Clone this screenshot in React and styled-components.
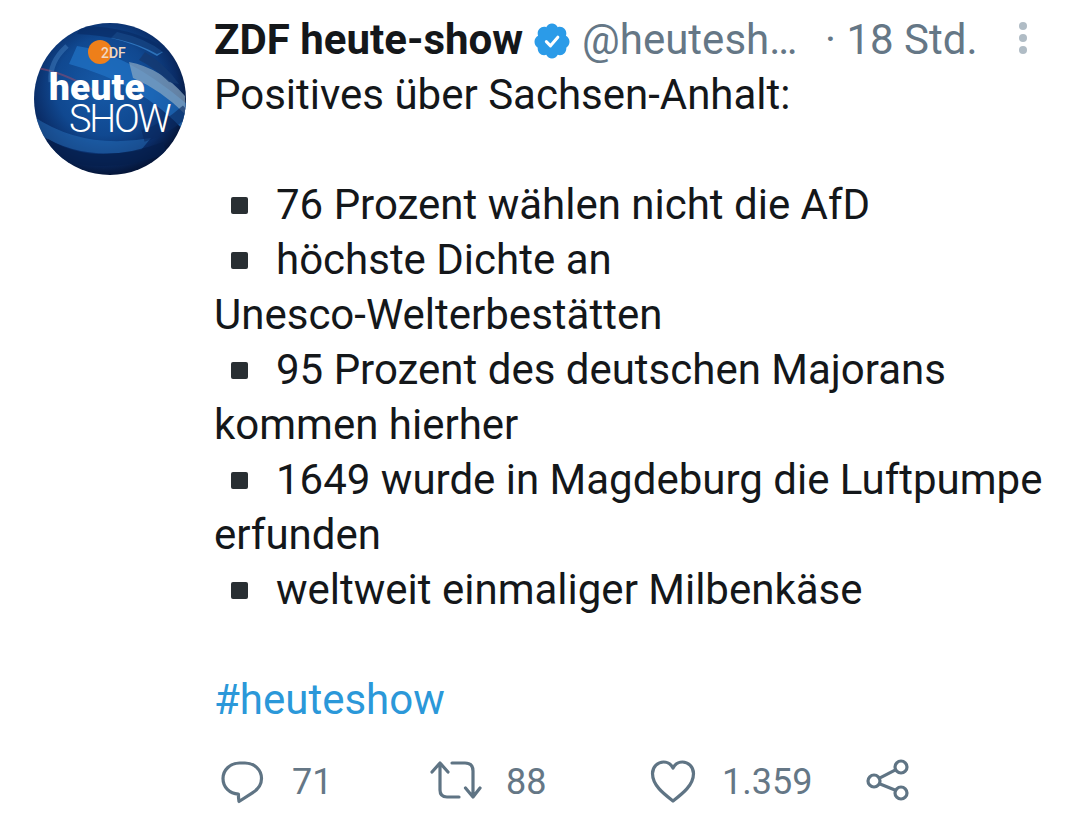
import React from "react";
import styled, { createGlobalStyle } from "styled-components";

const Global = createGlobalStyle`
  html, body { margin: 0; padding: 0; background: #fff; }
  body { font-family: Roboto, "Liberation Sans", sans-serif; }
`;

const Page = styled.div`
  width: 1080px;
  height: 816px;
  overflow: hidden;
  display: grid;
  grid-template-columns: 154px 1fr;
  column-gap: 28px;
  padding: 12px 0 0 33px;
  box-sizing: border-box;
  background: #fff;
`;

const Avatar = styled.svg`
  display: block;
  width: 154px;
  height: 154px;
  margin-top: 10px;
`;

const Main = styled.div`
  display: flex;
  flex-direction: column;
  min-width: 0;
  margin-left: -1px;
`;

const Header = styled.div`
  display: flex;
  align-items: center;
  height: 55px;
  white-space: nowrap;
`;

const Name = styled.span`
  font-size: 42px;
  font-weight: 700;
  color: #14171a;
`;

const Badge = styled.svg`
  width: 40px;
  height: 40px;
  margin: 3px 10px 0 9px;
  flex: none;
`;

const Handle = styled.span`
  font-size: 42px;
  color: #657786;
  width: 243px;
  flex: none;
`;

const Time = styled.span`
  font-size: 42px;
  color: #657786;
`;

const Dots = styled.svg`
  width: 12px;
  height: 36px;
  margin-left: 39px;
  margin-top: -4px;
  flex: none;
`;

const Body = styled.div`
  font-size: 42px;
  line-height: 55px;
  color: #14171a;
  width: 850px;
`;

const Line = styled.div`
  min-height: 55px;
  white-space: nowrap;
`;

const Square = styled.span`
  display: inline-block;
  width: 17px;
  height: 17px;
  margin: 0 28px 0 17px;
  background: #292f33;
  border-radius: 2px;
  vertical-align: 5px;
`;

const Hashtag = styled.span`
  color: #2b98d9;
`;

const Actions = styled.div`
  display: flex;
  align-items: center;
  height: 56px;
  margin-top: 27px;
`;

const Action = styled.div`
  display: flex;
  align-items: center;
  width: ${(p) => p.$w}px;
  margin-left: ${(p) => p.$ml || 0}px;
  font-size: 36px;
  color: #657786;
  flex: none;
`;

const Count = styled.span`
  margin-left: ${(p) => p.$gap}px;
`;

const Icon = styled.svg`
  width: ${(p) => p.$w || 48}px;
  height: 48px;
  fill: none;
  stroke: #5f7484;
  stroke-width: 3.2;
  stroke-linecap: round;
  stroke-linejoin: round;
  flex: none;
`;

const Logo = () => (
  <Avatar viewBox="0 0 154 154">
    <defs>
      <radialGradient id="globe" cx="46%" cy="42%" r="58%">
        <stop offset="0%" stopColor="#165aa8" />
        <stop offset="55%" stopColor="#104890" />
        <stop offset="82%" stopColor="#0a2c66" />
        <stop offset="100%" stopColor="#05163a" />
      </radialGradient>
      <clipPath id="disc"><circle cx="77" cy="77" r="76" /></clipPath>
    </defs>
    <circle cx="77" cy="77" r="76" fill="url(#globe)" />
    <g clipPath="url(#disc)">
      <path d="M44 24 Q92 30 154 82 L154 112 Q110 62 36 42Z" fill="#2173c6" opacity=".7" />
      <path d="M96 40 Q128 46 152 74 L152 92 Q128 68 100 56Z" fill="#8aa8c2" opacity=".7" />
      <path d="M112 30 Q132 42 146 62 L136 60 Q122 46 106 38Z" fill="#143a72" opacity=".85" />
      <path d="M84 10 Q112 16 130 30 L124 34 Q104 22 78 16Z" fill="#3c8ad4" opacity=".7" />
      <path d="M0 94 Q50 128 118 116 L108 128 Q50 140 6 112Z" fill="#2b76c0" opacity=".45" />
      <path d="M48 4 Q100 4 134 28 L124 32 Q92 14 44 12Z" fill="#092c66" opacity=".7" />
      <path d="M4 46 Q30 50 60 68" stroke="#a14a6a" strokeWidth="2" fill="none" opacity=".5" />
      <path d="M12 122 Q60 152 132 126" stroke="#061f4c" strokeWidth="12" fill="none" opacity=".75" />
      <path d="M110 114 Q132 108 154 88" stroke="#0a2a60" strokeWidth="12" fill="none" opacity=".6" />
      <path d="M18 60 Q16 40 34 24" stroke="#4e8ccb" strokeWidth="5" fill="none" opacity=".4" />
    </g>
    <circle cx="67" cy="30" r="12" fill="#ee7f1a" />
    <text x="68" y="36" fontFamily="Roboto, sans-serif" fontSize="14" fontWeight="500" fill="#f0d8c2">2DF</text>
    <text x="16" y="78" fontFamily="Roboto, sans-serif" fontSize="37" fontWeight="900" letterSpacing=".2" fill="#fff">heute</text>
    <text x="36" y="110" fontFamily="Roboto, sans-serif" fontSize="38" fontWeight="300" letterSpacing="-2.2" fill="#fff">SHOW</text>
  </Avatar>
);

const Verified = () => (
  <Badge viewBox="0 0 24 24">
    <path fill="#2b9be8" d="M22.5 12.5c0-1.58-.875-2.95-2.148-3.6.154-.435.238-.905.238-1.4 0-2.21-1.71-3.998-3.818-3.998-.47 0-.92.084-1.336.25C14.818 2.415 13.51 1.5 12 1.5s-2.816.917-3.437 2.25c-.415-.165-.866-.25-1.336-.25-2.11 0-3.818 1.79-3.818 4 0 .494.083.964.237 1.4-1.272.65-2.147 2.018-2.147 3.6 0 1.495.782 2.798 1.942 3.486-.02.17-.032.34-.032.514 0 2.21 1.708 4 3.818 4 .47 0 .92-.086 1.335-.25.62 1.334 1.926 2.25 3.437 2.25 1.512 0 2.818-.916 3.437-2.25.415.163.865.248 1.336.248 2.11 0 3.818-1.79 3.818-4 0-.174-.012-.344-.033-.513 1.158-.687 1.943-1.99 1.943-3.484z" />
    <path fill="none" stroke="#fff" strokeWidth="1.8" strokeLinecap="round" strokeLinejoin="round" d="M8.6 12.400l2.500 2.500 4.400-5.200" />
  </Badge>
);

const Reply = () => (
  <Icon viewBox="0 0 48 48">
    <path d="M21.500 5h5.500c9 0 16.500 6.600 16.500 15.500 0 6.300-3.400 10.700-8.700 14.100L21 43.500c-.4-2.400-.6-4.400-.6-7.400C11.500 35.600 5 29.200 5 20.500 5 11.800 12.500 5 21.500 5z" />
  </Icon>
);

const Retweet = () => (
  <Icon $w={54} viewBox="0 0 54 48">
    <path d="M4 14 L12 5 L20 14 M12 6 V32 Q12 39 19 39 H31" />
    <path d="M24 5 H37 Q45 5 45 13 V38 M37.500 30 L45 39 L52 30" />
  </Icon>
);

const Heart = () => (
  <Icon viewBox="0 0 48 48">
    <path d="M24 43C15 36 3.500 27.500 3.500 15.500 3.500 8.500 9 4 14.500 4 18.500 4 22 6 24 10 26 6 29.500 4 33.500 4 39 4 44.500 8.500 44.500 15.500 44.500 27.500 33 36 24 43Z" />
  </Icon>
);

const Share = () => (
  <Icon viewBox="0 0 48 48">
    <circle cx="10" cy="23" r="6" />
    <circle cx="37" cy="9" r="6" />
    <circle cx="37" cy="35" r="6" />
    <path d="M15.500 20.200 L31.500 11.800 M15.500 25.800 L31.500 32.200" />
  </Icon>
);

const bullets = [
  [true, "76 Prozent wählen nicht die AfD"],
  [true, "höchste Dichte an"],
  [false, "Unesco-Welterbestätten"],
  [true, "95 Prozent des deutschen Majorans"],
  [false, "kommen hierher"],
  [true, "1649 wurde in Magdeburg die Luftpumpe"],
  [false, "erfunden"],
  [true, "weltweit einmaliger Milbenkäse"],
];

export default function App() {
  return (
    <Page>
      <Global />
      <Logo />
      <Main>
        <Header>
          <Name>ZDF heute-show</Name>
          <Verified />
          <Handle>@heutesh…</Handle>
          <Time>· 18 Std.</Time>
          <Dots viewBox="0 0 12 36">
            <circle cx="6" cy="6" r="4" fill="#b0bcc5" />
            <circle cx="6" cy="18" r="4" fill="#b0bcc5" />
            <circle cx="6" cy="30" r="4" fill="#b0bcc5" />
          </Dots>
        </Header>
        <Body>
          <Line>Positives über Sachsen-Anhalt:</Line>
          <Line />
          {bullets.map(([b, t]) => (
            <Line key={t}>
              {b && <Square />}
              {t}
            </Line>
          ))}
          <Line />
          <Line><Hashtag>#heuteshow</Hashtag></Line>
        </Body>
        <Actions>
          <Action $w={210} $ml={4}><Reply /><Count $gap={26}>71</Count></Action>
          <Action $w={221}><Retweet /><Count $gap={24}>88</Count></Action>
          <Action $w={215}><Heart /><Count $gap={25}>1.359</Count></Action>
          <Action $w={48}><Share /></Action>
        </Actions>
      </Main>
    </Page>
  );
}
